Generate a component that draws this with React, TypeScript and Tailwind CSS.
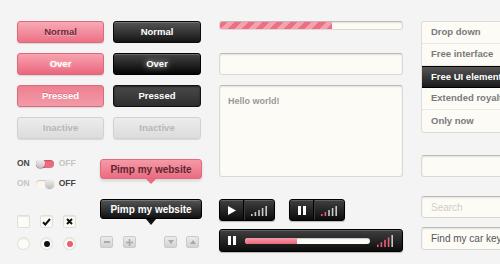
import React from "react";

type BtnVariant = "pinkNormal" | "pinkOver" | "pinkPressed" | "darkNormal" | "darkOver" | "darkPressed" | "inactive";

const btnStyles: Record<BtnVariant, string> = {
  pinkNormal:
    "bg-[linear-gradient(#f8aab6,#ec7185)] border-[#e1687c] text-[#6b2a35] [text-shadow:0_1px_0_rgba(255,255,255,0.35)]",
  pinkOver:
    "bg-[linear-gradient(#f8a3b0,#ea677c)] border-[#e1687c] text-white [text-shadow:0_0_3px_rgba(255,255,255,0.6)]",
  pinkPressed:
    "bg-[linear-gradient(#ee8090,#f29aa8)] border-[#df6a7d] text-white [text-shadow:0_-1px_0_rgba(150,40,60,0.3)]",
  darkNormal:
    "bg-[linear-gradient(#555555,#151515)] border-[#0a0a0a] text-white shadow-[inset_0_1px_0_rgba(255,255,255,0.2)]",
  darkOver:
    "bg-[linear-gradient(#444444,#050505)] border-[#000] text-white [text-shadow:0_0_6px_rgba(255,255,255,0.9)] shadow-[inset_0_1px_0_rgba(255,255,255,0.2)]",
  darkPressed:
    "bg-[linear-gradient(#4a4a4a,#2e2e2e)] border-[#111] text-white shadow-[inset_0_1px_2px_rgba(0,0,0,0.5)]",
  inactive: "bg-[linear-gradient(#ececec,#dcdcdc)] border-[#d2d2d2] text-[#b7b7b7]",
};

const Button = ({ label, variant }: { label: string; variant: BtnVariant }) => (
  <div
    className={`h-[22px] flex items-center justify-center rounded-[3px] border text-[9.5px] font-bold shadow-[0_1px_1px_rgba(0,0,0,0.12)] ${btnStyles[variant]}`}
  >
    {label}
  </div>
);

const VolumeBars = ({ pink = 0, tall = false }: { pink?: number; tall?: boolean }) => {
  const h = tall ? 12 : 10;
  return (
    <svg width="18" height={h} viewBox={`0 0 18 ${h}`}>
      {[0, 1, 2, 3, 4].map((i) => {
        const bh = Math.max(1.5, ((i + 1) / 5) * h);
        const fill = i < pink ? "#ea5d75" : "#c8c8c8";
        return <rect key={i} x={i * 3.6} y={h - bh} width="1.6" height={bh} fill={fill} />;
      })}
    </svg>
  );
};

const PauseIcon = () => (
  <svg width="8" height="9" viewBox="0 0 8 9">
    <rect x="0" y="0" width="3" height="9" fill="#fff" />
    <rect x="5" y="0" width="3" height="9" fill="#fff" />
  </svg>
);

const PlayIcon = () => (
  <svg width="8" height="9" viewBox="0 0 8 9">
    <path d="M0 0 L8 4.5 L0 9 Z" fill="#fff" />
  </svg>
);

const playerBox =
  "bg-[linear-gradient(#404040,#0c0c0c)] border border-black rounded-[3px] shadow-[inset_0_1px_0_rgba(255,255,255,0.18),0_1px_1px_rgba(0,0,0,0.25)]";

const MiniPlayer = ({ paused }: { paused?: boolean }) => (
  <div className={`w-[56px] h-[22px] flex ${playerBox}`}>
    <div className="w-[24px] flex items-center justify-center border-r border-black">
      {paused ? <PauseIcon /> : <PlayIcon />}
    </div>
    <div className="flex-1 flex items-center justify-center border-l border-[#3a3a3a] pt-[1px]">
      <VolumeBars pink={paused ? 2 : 0} />
    </div>
  </div>
);

const inputBox =
  "bg-[#fdfbf6] border border-[#dcd9d4] border-t-[#bdbab5] rounded-[3px] shadow-[inset_0_1px_2px_rgba(0,0,0,0.1)]";

const Toggle = ({ on }: { on: boolean }) => (
  <div className="flex items-center h-[9px] text-[8.5px] font-bold">
    <span className={on ? "text-[#444]" : "text-[#c4c4c4]"}>ON</span>
    <div
      className={`ml-[6px] w-[18px] h-[8px] rounded-full flex items-center shadow-[inset_0_1px_1px_rgba(0,0,0,0.2)] ${
        on ? "bg-[#ee6a80] justify-start" : "bg-[#fbf7ee] justify-end"
      }`}
    >
      <div className="w-[9px] h-[9px] rounded-full bg-[linear-gradient(#f2f2f2,#c2c2c2)] shadow-[0_1px_1px_rgba(0,0,0,0.3)]" />
    </div>
    <span className={`ml-[5px] ${on ? "text-[#c4c4c4]" : "text-[#444]"}`}>OFF</span>
  </div>
);

const checkBox =
  "w-[13px] h-[13px] rounded-[2px] bg-[#fdfbf6] border border-[#e2dfda] shadow-[inset_0_1px_1px_rgba(0,0,0,0.08)] flex items-center justify-center";
const radio =
  "w-[13px] h-[13px] rounded-full bg-[#fdfbf6] border border-[#e2dfda] shadow-[inset_0_1px_1px_rgba(0,0,0,0.08)] flex items-center justify-center";
const smallBtn =
  "w-[13px] h-[12px] rounded-[2px] bg-[linear-gradient(#ebebeb,#d2d2d2)] border border-[#cacaca] flex items-center justify-center";

export default function App() {
  const menu = ["Drop down", "Free interface", "Free UI elements", "Extended royalty", "Only now"];
  return (
    <div className="w-[500px] h-[264px] overflow-hidden bg-[#f4f4f4] font-['Liberation_Sans',Arial,sans-serif] flex pt-[21px] pl-[17px]">
      {/* left column */}
      <div className="w-[185px] shrink-0 flex flex-col">
        <div className="grid grid-cols-[87px_88px] gap-x-[9px] gap-y-[10px]">
          <Button label="Normal" variant="pinkNormal" />
          <Button label="Normal" variant="darkNormal" />
          <Button label="Over" variant="pinkOver" />
          <Button label="Over" variant="darkOver" />
          <Button label="Pressed" variant="pinkPressed" />
          <Button label="Pressed" variant="darkPressed" />
          <Button label="Inactive" variant="inactive" />
          <Button label="Inactive" variant="inactive" />
        </div>

        <div className="mt-[20px] flex">
          <div className="w-[83px] shrink-0 flex flex-col">
            <Toggle on />
            <div className="mt-[11px]">
              <Toggle on={false} />
            </div>
            <div className="mt-[27px] flex gap-[10px]">
              <div className={checkBox} />
              <div className={checkBox}>
                <svg width="9" height="8" viewBox="0 0 9 8">
                  <path d="M1 4.2 L3.3 6.5 L8 1" stroke="#111" strokeWidth="2" fill="none" />
                </svg>
              </div>
              <div className={checkBox}>
                <svg width="7" height="7" viewBox="0 0 7 7">
                  <path d="M1 1 L6 6 M6 1 L1 6" stroke="#111" strokeWidth="2" fill="none" />
                </svg>
              </div>
            </div>
            <div className="mt-[9px] flex gap-[10px]">
              <div className={radio} />
              <div className={radio}>
                <div className="w-[6px] h-[6px] rounded-full bg-[#111]" />
              </div>
              <div className={radio}>
                <div className="w-[6px] h-[6px] rounded-full bg-[#ec5c75]" />
              </div>
            </div>
          </div>

          <div className="w-[102px] shrink-0 flex flex-col">
            <div className="flex flex-col items-center">
              <div className="w-full h-[20px] rounded-[3px] bg-[linear-gradient(#f59aa8,#ea6c80)] border border-[#e3697d] flex items-center justify-center text-[10px] font-bold text-[#5e2630] shadow-[0_2px_3px_rgba(0,0,0,0.12)]">
                Pimp my website
              </div>
              <div className="w-0 h-0 border-x-[5px] border-x-transparent border-t-[5px] border-t-[#ea6c80]" />
            </div>
            <div className="mt-[15px] flex flex-col items-center">
              <div className="w-full h-[20px] rounded-[3px] bg-[linear-gradient(#555555,#111111)] border border-black flex items-center justify-center text-[10px] font-bold text-white shadow-[inset_0_1px_0_rgba(255,255,255,0.2)]">
                Pimp my website
              </div>
              <div className="w-0 h-0 border-x-[5px] border-x-transparent border-t-[6px] border-t-[#111]" />
            </div>
            <div className="mt-[11px] flex items-center">
              <div className={smallBtn}>
                <div className="w-[6px] h-[2px] bg-[#a9a9a9]" />
              </div>
              <div className={`${smallBtn} ml-[10px]`}>
                <svg width="7" height="7" viewBox="0 0 7 7">
                  <path d="M3.5 0 V7 M0 3.5 H7" stroke="#a9a9a9" strokeWidth="1.6" />
                </svg>
              </div>
              <div className={`${smallBtn} ml-[28px]`}>
                <div className="w-0 h-0 border-x-[3.5px] border-x-transparent border-t-[4px] border-t-[#a9a9a9]" />
              </div>
              <div className={`${smallBtn} ml-[9px]`}>
                <div className="w-0 h-0 border-x-[3.5px] border-x-transparent border-b-[4px] border-b-[#a9a9a9]" />
              </div>
            </div>
          </div>
        </div>
      </div>

      {/* middle column */}
      <div className="ml-[17px] w-[184px] shrink-0 flex flex-col">
        <div className={`h-[9px] overflow-hidden ${inputBox}`}>
          <div className="w-[61.5%] h-full bg-[repeating-linear-gradient(135deg,#ee6f84_0px,#ee6f84_5px,#f5a2af_5px,#f5a2af_10px)]" />
        </div>
        <div className={`mt-[23px] h-[22px] ${inputBox}`} />
        <div className={`mt-[10px] h-[92px] px-[8px] pt-[9px] text-[9px] font-bold text-[#999] ${inputBox}`}>
          Hello world!
        </div>
        <div className="mt-[22px] flex gap-[14px]">
          <MiniPlayer />
          <MiniPlayer paused />
        </div>
        <div className={`mt-[8px] h-[23px] flex items-center pl-[8px] pr-[7px] ${playerBox}`}>
          <PauseIcon />
          <div className="ml-[9px] w-[125px] h-[6px] rounded-full bg-[#fdfbf6] overflow-hidden shadow-[inset_0_1px_1px_rgba(0,0,0,0.2)]">
            <div className="w-[52px] h-full bg-[linear-gradient(#f49aa8,#e9687d)]" />
          </div>
          <div className="ml-auto pt-[1px]">
            <VolumeBars pink={4} tall />
          </div>
        </div>
      </div>

      {/* right column */}
      <div className="ml-[18px] w-[110px] shrink-0 flex flex-col">
        <div className="border border-[#dedbd6] rounded-[3px] bg-[#fdfbf6] flex flex-col divide-y divide-[#ebe8e2] overflow-hidden">
          {menu.map((m, i) =>
            i === 2 ? (
              <div
                key={m}
                className="h-[22px] flex items-center pl-[9px] text-[9.5px] font-bold text-white whitespace-nowrap bg-[linear-gradient(#555555,#1a1a1a)] border-t border-black"
              >
                {m}
              </div>
            ) : (
              <div key={m} className="h-[22px] flex items-center pl-[9px] text-[9.5px] font-bold text-[#7a7a7a] whitespace-nowrap">
                {m}
              </div>
            )
          )}
        </div>
        <div className={`mt-[22px] h-[22px] ${inputBox}`} />
        <div className={`mt-[19px] h-[22px] flex items-center pl-[9px] text-[10px] text-[#d0cdc8] ${inputBox}`}>
          Search
        </div>
        <div className={`mt-[9px] h-[23px] flex items-center pl-[9px] text-[10px] text-[#555] whitespace-nowrap ${inputBox}`}>
          Find my car keys
        </div>
      </div>
    </div>
  );
}
